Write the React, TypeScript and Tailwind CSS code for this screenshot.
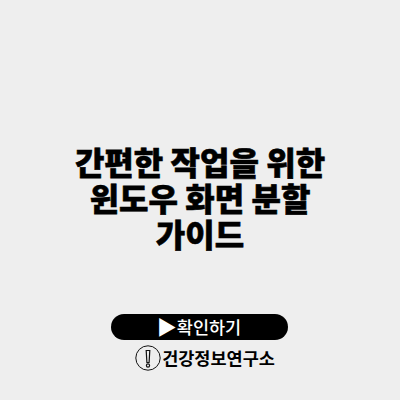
export default function App() {
  const font = { fontFamily: '"Noto Sans CJK KR", "Noto Sans", sans-serif' };
  return (
    <div style={font} className="w-[400px] h-[400px] bg-[#eeeeee] flex flex-col items-center pt-[143px] overflow-hidden">
      <h1 className="w-[320px] text-center text-[32px] leading-[36px] font-black text-black [-webkit-text-stroke:0.6px_black]">
        간편한 작업을 위한<br />윈도우 화면 분할<br />가이드
      </h1>
      <div className="mt-[63px] mr-[1px] w-[177px] h-[26px] rounded-full bg-black flex items-center justify-center text-white font-medium leading-none">
        <span className="text-[20px] leading-none ml-[-1px]">▶</span>
        <span className="text-[17.5px] leading-none">확인하기</span>
      </div>
      <div className="mt-[4px] ml-[10px] flex items-center gap-[1px]">
        <svg width="26" height="28" viewBox="0 0 26 28" fill="none" stroke="#111" strokeWidth="1">
          <circle cx="13" cy="14" r="12.2" />
          <path d="M11.2 6.5h3.6l-.7 12h-2.2z" strokeWidth="1.2" />
          <circle cx="13" cy="21.5" r="1.6" strokeWidth="1.2" />
        </svg>
        <span className="text-[17.5px] font-bold leading-none text-black">건강정보연구소</span>
      </div>
    </div>
  );
}
